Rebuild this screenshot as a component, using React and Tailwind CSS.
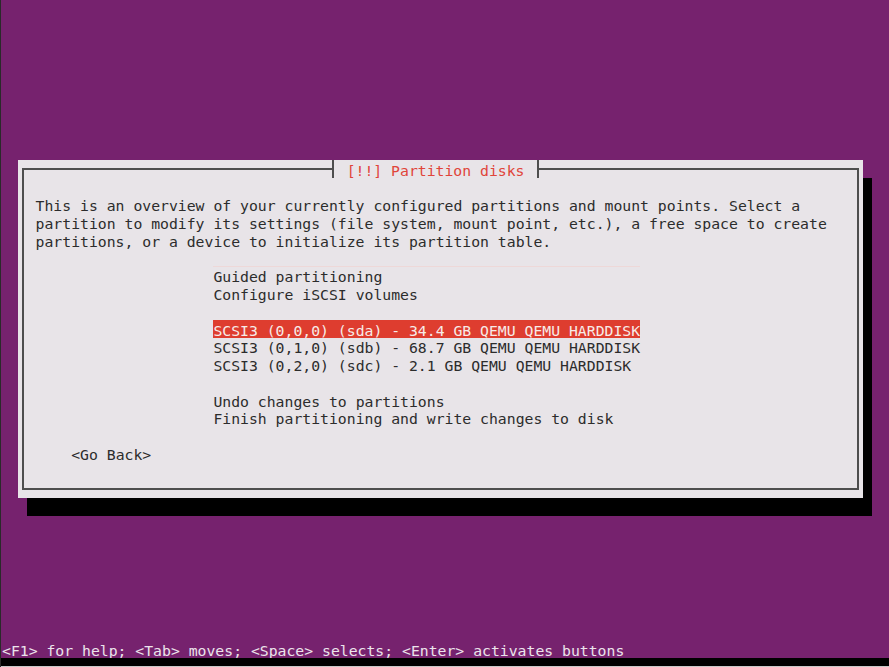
import React from 'react';

const mono = { fontFamily: '"DejaVu Sans Mono", "Liberation Mono", monospace' };

const menu = [
  { label: 'Guided partitioning' },
  { label: 'Configure iSCSI volumes' },
  { label: '' },
  { label: 'SCSI3 (0,0,0) (sda) - 34.4 GB QEMU QEMU HARDDISK', active: true },
  { label: 'SCSI3 (0,1,0) (sdb) - 68.7 GB QEMU QEMU HARDDISK' },
  { label: 'SCSI3 (0,2,0) (sdc) - 2.1 GB QEMU QEMU HARDDISK' },
  { label: '' },
  { label: 'Undo changes to partitions' },
  { label: 'Finish partitioning and write changes to disk' },
];

// one box-drawing cell (┤ or ├) sitting on the frame line
const Tick = ({ side }) => (
  <div className="relative w-[8.89px] h-full">
    <div className={side === 'left' ? 'absolute right-0 top-0 w-[3.4px] h-full bg-[#e8e4e8]' : 'absolute left-0 top-0 w-[3.4px] h-full bg-[#e8e4e8]'} />
    <div className="absolute left-[3.4px] top-0 w-[2px] h-full bg-[#4e4e4e]" />
  </div>
);

const App = () => {
  return (
    <div
      className="w-[889px] h-[667px] bg-[#76226e] border-l border-[#2a2a2a] flex flex-col overflow-hidden text-[14.77px] leading-[17.78px]"
      style={mono}
    >
      <div className="h-[160px] shrink-0" />

      {/* Dialog */}
      <div className="ml-[17px] w-[845px] h-[338px] shrink-0 bg-[#e8e4e8] shadow-[9px_18px_0_0_#000] pt-[8px] pl-[4px]">
        <div className="relative w-[837px] h-[322px] border-2 border-[#4e4e4e] pl-[11.6px] pt-[25.6px] text-[#2c2c2c]">
          {/* title */}
          <div className="absolute left-[304.9px] -top-[10px] h-[17.78px] flex">
            <Tick side="left" />
            <div className="bg-[#e8e4e8] text-[#e0443a] whitespace-pre pt-[1.5px]">{' [!!] Partition disks '}</div>
            <Tick side="right" />
          </div>

          <div className="whitespace-pre pt-[1.5px]">
            <div>This is an overview of your currently configured partitions and mount points. Select a</div>
            <div>partition to modify its settings (file system, mount point, etc.), a free space to create</div>
            <div>partitions, or a device to initialize its partition table.</div>
          </div>

          <div className="mt-[15.3px] ml-[177.8px] w-[426.7px] border-t border-[#eed8d8] whitespace-pre">
            {menu.map((item, i) => (
              <div
                key={i}
                className={item.active ? 'h-[17.78px] pt-[1.5px] bg-[#de3d2f] text-[#f7ebe8]' : 'h-[17.78px] pt-[1.5px]'}
              >
                {item.label}
              </div>
            ))}
          </div>

          <div className="mt-[17.78px] ml-[35.6px] pt-[1.5px] whitespace-pre">{'<Go Back>'}</div>
        </div>
      </div>

      {/* status line */}
      <div className="mt-auto h-[17.78px] shrink-0 text-[#ece4ec] whitespace-pre pl-[1px] pt-[1.5px]">
        {'<F1> for help; <Tab> moves; <Space> selects; <Enter> activates buttons'}
      </div>
      <div className="h-[8px] shrink-0 bg-black" />
      <div className="h-[1px] shrink-0 bg-[#c8c8c8]" />
    </div>
  );
};

export default App;
